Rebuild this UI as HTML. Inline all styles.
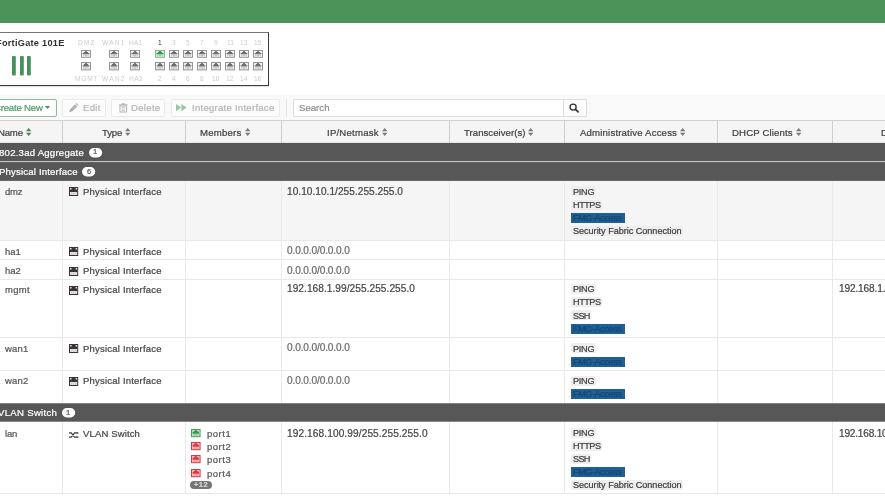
<!DOCTYPE html>
<html>
<head>
<meta charset="utf-8">
<title>Interfaces</title>
<style>
html,body{margin:0;padding:0;}
body{width:885px;height:498px;overflow:hidden;background:#fff;position:relative;font-family:"Liberation Sans",sans-serif;font-size:9.3px;color:#444;}
.a{position:absolute;}
.t{position:absolute;white-space:pre;will-change:transform;-webkit-text-stroke:0.22px;}
#w{position:absolute;left:-8px;top:-8px;width:901px;height:514px;overflow:hidden;filter:blur(0.45px);}
#i{position:absolute;left:8px;top:8px;width:885px;height:498px;opacity:0.999;}
svg{position:absolute;overflow:visible;}
</style>
</head>
<body>
<div id="w"><div id="i">

<div class="a" style="left:-8px;top:-8px;width:901px;height:31px;background:#4a9359"></div>
<div class="a" style="left:-10px;top:32px;width:277px;height:52px;border:1px solid #3a3a3a;border-top-color:#777;background:#fff;box-shadow:0 1px 1px rgba(0,0,0,.12)"></div>
<div class="t" style="left:-3.60px;top:37.21px;font-size:9.2px;line-height:12px;letter-spacing:0.267px;color:#303030;font-weight:bold;-webkit-text-stroke:0;">FortiGate 101E</div>
<svg style="left:12.4px;top:56px" width="3.8" height="19.5"><rect width="3.8" height="19.5" rx="1" fill="#44925b"/></svg>
<svg style="left:19.9px;top:56px" width="3.8" height="19.5"><rect width="3.8" height="19.5" rx="1" fill="#44925b"/></svg>
<svg style="left:27.3px;top:56px" width="3.8" height="19.5"><rect width="3.8" height="19.5" rx="1" fill="#44925b"/></svg>
<div class="t" style="left:77.65px;top:36.61px;font-size:6.6px;line-height:12px;letter-spacing:1.068px;color:#cdcdcd;-webkit-text-stroke:0;">DMZ</div>
<div class="t" style="left:74.65px;top:73.01px;font-size:6.6px;line-height:12px;letter-spacing:0.836px;color:#cdcdcd;-webkit-text-stroke:0;">MGMT</div>
<svg style="left:81.30000000000001px;top:50px" width="10" height="7.8" viewBox="0 0 10 8" preserveAspectRatio="none"><rect x=".5" y=".5" width="9" height="7" fill="#f4f4f4" stroke="#969696" stroke-width="1"/><path d="M1.6 4.4V3h1.3V2h1.2V.7h1.8V2h1.2v1h1.3v1.4z" fill="#6e6e6e"/><path d="M2.8 4.9v1.5M4.3 4.9v1.5M5.7 4.9v1.5M7.2 4.9v1.5" stroke="#9a9a9a" stroke-width=".7"/></svg>
<svg style="left:81.30000000000001px;top:62.2px" width="10" height="8.4" viewBox="0 0 10 8" preserveAspectRatio="none"><rect x=".5" y=".5" width="9" height="7" fill="#f4f4f4" stroke="#969696" stroke-width="1"/><path d="M1.6 4.4V3h1.3V2h1.2V.7h1.8V2h1.2v1h1.3v1.4z" fill="#6e6e6e"/><path d="M2.8 4.9v1.5M4.3 4.9v1.5M5.7 4.9v1.5M7.2 4.9v1.5" stroke="#9a9a9a" stroke-width=".7"/></svg>
<div class="t" style="left:102.05px;top:36.61px;font-size:6.6px;line-height:12px;letter-spacing:1.172px;color:#cdcdcd;-webkit-text-stroke:0;">WAN1</div>
<div class="t" style="left:102.05px;top:73.01px;font-size:6.6px;line-height:12px;letter-spacing:1.172px;color:#cdcdcd;-webkit-text-stroke:0;">WAN2</div>
<svg style="left:108.7px;top:50px" width="10" height="7.8" viewBox="0 0 10 8" preserveAspectRatio="none"><rect x=".5" y=".5" width="9" height="7" fill="#f4f4f4" stroke="#969696" stroke-width="1"/><path d="M1.6 4.4V3h1.3V2h1.2V.7h1.8V2h1.2v1h1.3v1.4z" fill="#6e6e6e"/><path d="M2.8 4.9v1.5M4.3 4.9v1.5M5.7 4.9v1.5M7.2 4.9v1.5" stroke="#9a9a9a" stroke-width=".7"/></svg>
<svg style="left:108.7px;top:62.2px" width="10" height="8.4" viewBox="0 0 10 8" preserveAspectRatio="none"><rect x=".5" y=".5" width="9" height="7" fill="#f4f4f4" stroke="#969696" stroke-width="1"/><path d="M1.6 4.4V3h1.3V2h1.2V.7h1.8V2h1.2v1h1.3v1.4z" fill="#6e6e6e"/><path d="M2.8 4.9v1.5M4.3 4.9v1.5M5.7 4.9v1.5M7.2 4.9v1.5" stroke="#9a9a9a" stroke-width=".7"/></svg>
<div class="t" style="left:128.75px;top:36.61px;font-size:6.6px;line-height:12px;letter-spacing:0.224px;color:#cdcdcd;-webkit-text-stroke:0;">HA1</div>
<div class="t" style="left:128.50px;top:73.01px;font-size:6.6px;line-height:12px;letter-spacing:0.391px;color:#cdcdcd;-webkit-text-stroke:0;">HA2</div>
<svg style="left:130.4px;top:50px" width="10" height="7.8" viewBox="0 0 10 8" preserveAspectRatio="none"><rect x=".5" y=".5" width="9" height="7" fill="#f4f4f4" stroke="#969696" stroke-width="1"/><path d="M1.6 4.4V3h1.3V2h1.2V.7h1.8V2h1.2v1h1.3v1.4z" fill="#6e6e6e"/><path d="M2.8 4.9v1.5M4.3 4.9v1.5M5.7 4.9v1.5M7.2 4.9v1.5" stroke="#9a9a9a" stroke-width=".7"/></svg>
<svg style="left:130.4px;top:62.2px" width="10" height="8.4" viewBox="0 0 10 8" preserveAspectRatio="none"><rect x=".5" y=".5" width="9" height="7" fill="#f4f4f4" stroke="#969696" stroke-width="1"/><path d="M1.6 4.4V3h1.3V2h1.2V.7h1.8V2h1.2v1h1.3v1.4z" fill="#6e6e6e"/><path d="M2.8 4.9v1.5M4.3 4.9v1.5M5.7 4.9v1.5M7.2 4.9v1.5" stroke="#9a9a9a" stroke-width=".7"/></svg>
<div class="t" style="left:158.16px;top:36.61px;font-size:6.6px;line-height:12px;letter-spacing:0.000px;color:#333;-webkit-text-stroke:0;">1</div>
<div class="t" style="left:158.16px;top:73.01px;font-size:6.6px;line-height:12px;letter-spacing:0.000px;color:#cdcdcd;-webkit-text-stroke:0;">2</div>
<svg style="left:154.9px;top:50px" width="10" height="7.8" viewBox="0 0 10 8" preserveAspectRatio="none"><rect x=".5" y=".5" width="9" height="7" fill="#d9efdd" stroke="#7cc08c" stroke-width="1"/><path d="M1.6 4.4V3h1.3V2h1.2V.7h1.8V2h1.2v1h1.3v1.4z" fill="#3c8f54"/><path d="M2.8 4.9v1.5M4.3 4.9v1.5M5.7 4.9v1.5M7.2 4.9v1.5" stroke="#69b07c" stroke-width=".7"/></svg>
<svg style="left:154.9px;top:62.2px" width="10" height="8.4" viewBox="0 0 10 8" preserveAspectRatio="none"><rect x=".5" y=".5" width="9" height="7" fill="#f4f4f4" stroke="#969696" stroke-width="1"/><path d="M1.6 4.4V3h1.3V2h1.2V.7h1.8V2h1.2v1h1.3v1.4z" fill="#6e6e6e"/><path d="M2.8 4.9v1.5M4.3 4.9v1.5M5.7 4.9v1.5M7.2 4.9v1.5" stroke="#9a9a9a" stroke-width=".7"/></svg>
<div class="t" style="left:172.16px;top:36.61px;font-size:6.6px;line-height:12px;letter-spacing:0.000px;color:#cdcdcd;-webkit-text-stroke:0;">3</div>
<div class="t" style="left:172.16px;top:73.01px;font-size:6.6px;line-height:12px;letter-spacing:0.000px;color:#cdcdcd;-webkit-text-stroke:0;">4</div>
<svg style="left:168.9px;top:50px" width="10" height="7.8" viewBox="0 0 10 8" preserveAspectRatio="none"><rect x=".5" y=".5" width="9" height="7" fill="#f4f4f4" stroke="#969696" stroke-width="1"/><path d="M1.6 4.4V3h1.3V2h1.2V.7h1.8V2h1.2v1h1.3v1.4z" fill="#6e6e6e"/><path d="M2.8 4.9v1.5M4.3 4.9v1.5M5.7 4.9v1.5M7.2 4.9v1.5" stroke="#9a9a9a" stroke-width=".7"/></svg>
<svg style="left:168.9px;top:62.2px" width="10" height="8.4" viewBox="0 0 10 8" preserveAspectRatio="none"><rect x=".5" y=".5" width="9" height="7" fill="#f4f4f4" stroke="#969696" stroke-width="1"/><path d="M1.6 4.4V3h1.3V2h1.2V.7h1.8V2h1.2v1h1.3v1.4z" fill="#6e6e6e"/><path d="M2.8 4.9v1.5M4.3 4.9v1.5M5.7 4.9v1.5M7.2 4.9v1.5" stroke="#9a9a9a" stroke-width=".7"/></svg>
<div class="t" style="left:186.16px;top:36.61px;font-size:6.6px;line-height:12px;letter-spacing:0.000px;color:#cdcdcd;-webkit-text-stroke:0;">5</div>
<div class="t" style="left:186.16px;top:73.01px;font-size:6.6px;line-height:12px;letter-spacing:0.000px;color:#cdcdcd;-webkit-text-stroke:0;">6</div>
<svg style="left:182.9px;top:50px" width="10" height="7.8" viewBox="0 0 10 8" preserveAspectRatio="none"><rect x=".5" y=".5" width="9" height="7" fill="#f4f4f4" stroke="#969696" stroke-width="1"/><path d="M1.6 4.4V3h1.3V2h1.2V.7h1.8V2h1.2v1h1.3v1.4z" fill="#6e6e6e"/><path d="M2.8 4.9v1.5M4.3 4.9v1.5M5.7 4.9v1.5M7.2 4.9v1.5" stroke="#9a9a9a" stroke-width=".7"/></svg>
<svg style="left:182.9px;top:62.2px" width="10" height="8.4" viewBox="0 0 10 8" preserveAspectRatio="none"><rect x=".5" y=".5" width="9" height="7" fill="#f4f4f4" stroke="#969696" stroke-width="1"/><path d="M1.6 4.4V3h1.3V2h1.2V.7h1.8V2h1.2v1h1.3v1.4z" fill="#6e6e6e"/><path d="M2.8 4.9v1.5M4.3 4.9v1.5M5.7 4.9v1.5M7.2 4.9v1.5" stroke="#9a9a9a" stroke-width=".7"/></svg>
<div class="t" style="left:200.16px;top:36.61px;font-size:6.6px;line-height:12px;letter-spacing:0.000px;color:#cdcdcd;-webkit-text-stroke:0;">7</div>
<div class="t" style="left:200.16px;top:73.01px;font-size:6.6px;line-height:12px;letter-spacing:0.000px;color:#cdcdcd;-webkit-text-stroke:0;">8</div>
<svg style="left:196.9px;top:50px" width="10" height="7.8" viewBox="0 0 10 8" preserveAspectRatio="none"><rect x=".5" y=".5" width="9" height="7" fill="#f4f4f4" stroke="#969696" stroke-width="1"/><path d="M1.6 4.4V3h1.3V2h1.2V.7h1.8V2h1.2v1h1.3v1.4z" fill="#6e6e6e"/><path d="M2.8 4.9v1.5M4.3 4.9v1.5M5.7 4.9v1.5M7.2 4.9v1.5" stroke="#9a9a9a" stroke-width=".7"/></svg>
<svg style="left:196.9px;top:62.2px" width="10" height="8.4" viewBox="0 0 10 8" preserveAspectRatio="none"><rect x=".5" y=".5" width="9" height="7" fill="#f4f4f4" stroke="#969696" stroke-width="1"/><path d="M1.6 4.4V3h1.3V2h1.2V.7h1.8V2h1.2v1h1.3v1.4z" fill="#6e6e6e"/><path d="M2.8 4.9v1.5M4.3 4.9v1.5M5.7 4.9v1.5M7.2 4.9v1.5" stroke="#9a9a9a" stroke-width=".7"/></svg>
<div class="t" style="left:214.16px;top:36.61px;font-size:6.6px;line-height:12px;letter-spacing:0.000px;color:#cdcdcd;-webkit-text-stroke:0;">9</div>
<div class="t" style="left:212.33px;top:73.01px;font-size:6.6px;line-height:12px;letter-spacing:0.000px;color:#cdcdcd;-webkit-text-stroke:0;">10</div>
<svg style="left:210.9px;top:50px" width="10" height="7.8" viewBox="0 0 10 8" preserveAspectRatio="none"><rect x=".5" y=".5" width="9" height="7" fill="#f4f4f4" stroke="#969696" stroke-width="1"/><path d="M1.6 4.4V3h1.3V2h1.2V.7h1.8V2h1.2v1h1.3v1.4z" fill="#6e6e6e"/><path d="M2.8 4.9v1.5M4.3 4.9v1.5M5.7 4.9v1.5M7.2 4.9v1.5" stroke="#9a9a9a" stroke-width=".7"/></svg>
<svg style="left:210.9px;top:62.2px" width="10" height="8.4" viewBox="0 0 10 8" preserveAspectRatio="none"><rect x=".5" y=".5" width="9" height="7" fill="#f4f4f4" stroke="#969696" stroke-width="1"/><path d="M1.6 4.4V3h1.3V2h1.2V.7h1.8V2h1.2v1h1.3v1.4z" fill="#6e6e6e"/><path d="M2.8 4.9v1.5M4.3 4.9v1.5M5.7 4.9v1.5M7.2 4.9v1.5" stroke="#9a9a9a" stroke-width=".7"/></svg>
<div class="t" style="left:226.57px;top:36.61px;font-size:6.6px;line-height:12px;letter-spacing:0.000px;color:#cdcdcd;-webkit-text-stroke:0;">11</div>
<div class="t" style="left:226.33px;top:73.01px;font-size:6.6px;line-height:12px;letter-spacing:0.000px;color:#cdcdcd;-webkit-text-stroke:0;">12</div>
<svg style="left:224.9px;top:50px" width="10" height="7.8" viewBox="0 0 10 8" preserveAspectRatio="none"><rect x=".5" y=".5" width="9" height="7" fill="#f4f4f4" stroke="#969696" stroke-width="1"/><path d="M1.6 4.4V3h1.3V2h1.2V.7h1.8V2h1.2v1h1.3v1.4z" fill="#6e6e6e"/><path d="M2.8 4.9v1.5M4.3 4.9v1.5M5.7 4.9v1.5M7.2 4.9v1.5" stroke="#9a9a9a" stroke-width=".7"/></svg>
<svg style="left:224.9px;top:62.2px" width="10" height="8.4" viewBox="0 0 10 8" preserveAspectRatio="none"><rect x=".5" y=".5" width="9" height="7" fill="#f4f4f4" stroke="#969696" stroke-width="1"/><path d="M1.6 4.4V3h1.3V2h1.2V.7h1.8V2h1.2v1h1.3v1.4z" fill="#6e6e6e"/><path d="M2.8 4.9v1.5M4.3 4.9v1.5M5.7 4.9v1.5M7.2 4.9v1.5" stroke="#9a9a9a" stroke-width=".7"/></svg>
<div class="t" style="left:240.33px;top:36.61px;font-size:6.6px;line-height:12px;letter-spacing:0.000px;color:#cdcdcd;-webkit-text-stroke:0;">13</div>
<div class="t" style="left:240.33px;top:73.01px;font-size:6.6px;line-height:12px;letter-spacing:0.000px;color:#cdcdcd;-webkit-text-stroke:0;">14</div>
<svg style="left:238.9px;top:50px" width="10" height="7.8" viewBox="0 0 10 8" preserveAspectRatio="none"><rect x=".5" y=".5" width="9" height="7" fill="#f4f4f4" stroke="#969696" stroke-width="1"/><path d="M1.6 4.4V3h1.3V2h1.2V.7h1.8V2h1.2v1h1.3v1.4z" fill="#6e6e6e"/><path d="M2.8 4.9v1.5M4.3 4.9v1.5M5.7 4.9v1.5M7.2 4.9v1.5" stroke="#9a9a9a" stroke-width=".7"/></svg>
<svg style="left:238.9px;top:62.2px" width="10" height="8.4" viewBox="0 0 10 8" preserveAspectRatio="none"><rect x=".5" y=".5" width="9" height="7" fill="#f4f4f4" stroke="#969696" stroke-width="1"/><path d="M1.6 4.4V3h1.3V2h1.2V.7h1.8V2h1.2v1h1.3v1.4z" fill="#6e6e6e"/><path d="M2.8 4.9v1.5M4.3 4.9v1.5M5.7 4.9v1.5M7.2 4.9v1.5" stroke="#9a9a9a" stroke-width=".7"/></svg>
<div class="t" style="left:254.33px;top:36.61px;font-size:6.6px;line-height:12px;letter-spacing:0.000px;color:#cdcdcd;-webkit-text-stroke:0;">15</div>
<div class="t" style="left:254.33px;top:73.01px;font-size:6.6px;line-height:12px;letter-spacing:0.000px;color:#cdcdcd;-webkit-text-stroke:0;">16</div>
<svg style="left:252.9px;top:50px" width="10" height="7.8" viewBox="0 0 10 8" preserveAspectRatio="none"><rect x=".5" y=".5" width="9" height="7" fill="#f4f4f4" stroke="#969696" stroke-width="1"/><path d="M1.6 4.4V3h1.3V2h1.2V.7h1.8V2h1.2v1h1.3v1.4z" fill="#6e6e6e"/><path d="M2.8 4.9v1.5M4.3 4.9v1.5M5.7 4.9v1.5M7.2 4.9v1.5" stroke="#9a9a9a" stroke-width=".7"/></svg>
<svg style="left:252.9px;top:62.2px" width="10" height="8.4" viewBox="0 0 10 8" preserveAspectRatio="none"><rect x=".5" y=".5" width="9" height="7" fill="#f4f4f4" stroke="#969696" stroke-width="1"/><path d="M1.6 4.4V3h1.3V2h1.2V.7h1.8V2h1.2v1h1.3v1.4z" fill="#6e6e6e"/><path d="M2.8 4.9v1.5M4.3 4.9v1.5M5.7 4.9v1.5M7.2 4.9v1.5" stroke="#9a9a9a" stroke-width=".7"/></svg>
<div class="a" style="left:-8px;top:95px;width:901px;height:25px;background:#f9f9f9"></div>
<div class="a" style="left:-10px;top:99px;width:64.5px;height:16px;border:1px solid #8dbb99;border-radius:2px;background:#fff"></div>
<div class="t" style="left:-6.30px;top:102.37px;font-size:9.6px;line-height:12px;letter-spacing:-0.196px;color:#4f9a63;">Create New</div>
<svg style="left:45.2px;top:106.3px" width="5" height="3" viewBox="0 0 5 3"><path d="M0 0h5L2.5 3z" fill="#4f8a5f"/></svg>
<div class="a" style="left:62px;top:99px;width:42px;height:16px;border:1px solid #eaeaea;border-radius:2px;background:#fcfcfc"></div>
<svg style="left:68.5px;top:102.5px" width="9.5" height="9.5" viewBox="0 0 10 10"><path d="M0.3 9.7l.7-2.9 5.4-5.4 2.2 2.2-5.4 5.4zM7 .8l.9-.8 2.1 2.2-.8.8z" fill="#b0b0b0"/></svg>
<div class="t" style="left:83.00px;top:102.37px;font-size:9.6px;line-height:12px;letter-spacing:0.313px;color:#b4b4b4;">Edit</div>
<div class="a" style="left:111px;top:99px;width:52px;height:16px;border:1px solid #eaeaea;border-radius:2px;background:#fcfcfc"></div>
<svg style="left:118.5px;top:102.5px" width="8.5" height="9.5" viewBox="0 0 9 10"><path d="M0 1.4h2.8V.3h3.4v1.1H9v1.2H0z" fill="#b6b6b6"/><path d="M1 3.2h7v6.3H1z" fill="none" stroke="#b6b6b6" stroke-width="1.1"/><path d="M2.9 4.8h3.2M2.9 6.4h3.2M2.9 8h3.2" stroke="#b6b6b6" stroke-width=".8"/></svg>
<div class="t" style="left:130.50px;top:102.37px;font-size:9.6px;line-height:12px;letter-spacing:0.294px;color:#b4b4b4;">Delete</div>
<div class="a" style="left:170.5px;top:99px;width:107.5px;height:16px;border:1px solid #eaeaea;border-radius:2px;background:#fcfcfc"></div>
<svg style="left:176.4px;top:104.3px" width="10.6" height="7.2" viewBox="0 0 10.6 8.4" preserveAspectRatio="none"><path d="M0 0l5.2 4.2L0 8.4zM5.4 0l5.2 4.2-5.2 4.2z" fill="#96c6a2"/></svg>
<div class="t" style="left:191.50px;top:102.37px;font-size:9.6px;line-height:12px;letter-spacing:0.243px;color:#b4b4b4;">Integrate Interface</div>
<div class="a" style="left:286px;top:99px;width:1px;height:18px;background:#e3e3e3"></div>
<div class="a" style="left:293px;top:99px;width:269.5px;height:16px;border:1px solid #dddddd;background:#fff"></div>
<div class="t" style="left:298.80px;top:102.37px;font-size:9.6px;line-height:12px;letter-spacing:0.016px;color:#8e8e8e;">Search</div>
<div class="a" style="left:563.5px;top:99px;width:22px;height:16px;border:1px solid #dddddd;border-left:none;background:#fdfdfd"></div>
<div class="a" style="left:563px;top:100px;width:1px;height:16px;background:#dcdcdc"></div>
<svg style="left:569.3px;top:103.4px" width="10.5" height="10" viewBox="0 0 10.5 10"><circle cx="4.1" cy="4.1" r="3.05" fill="none" stroke="#333" stroke-width="1.35"/><path d="M6.5 6.4l2.6 2.5" stroke="#333" stroke-width="1.7" stroke-linecap="round"/></svg>
<div class="a" style="left:-8px;top:120px;width:901px;height:23px;background:#f5f5f5;border-top:1px solid #d0d0d0;box-sizing:border-box"></div>
<div class="a" style="left:61.5px;top:121px;width:1px;height:22px;background:#cfcfcf"></div>
<div class="a" style="left:184.5px;top:121px;width:1px;height:22px;background:#cfcfcf"></div>
<div class="a" style="left:280.5px;top:121px;width:1px;height:22px;background:#cfcfcf"></div>
<div class="a" style="left:449.0px;top:121px;width:1px;height:22px;background:#cfcfcf"></div>
<div class="a" style="left:563.8px;top:121px;width:1px;height:22px;background:#cfcfcf"></div>
<div class="a" style="left:716.9px;top:121px;width:1px;height:22px;background:#cfcfcf"></div>
<div class="a" style="left:832.1px;top:121px;width:1px;height:22px;background:#cfcfcf"></div>
<div class="t" style="left:-2.20px;top:127.07px;font-size:9.6px;line-height:12px;letter-spacing:-0.198px;color:#3f3f3f;">Name</div>
<svg style="left:26.3px;top:128.2px" width="5.4" height="8.1" viewBox="0 0 6 9" preserveAspectRatio="none"><path d="M0 3.7L3 0l3 3.7zM0 5.3h6L3 9z" fill="#52805f"/></svg>
<div class="t" style="left:101.60px;top:127.07px;font-size:9.6px;line-height:12px;letter-spacing:-0.178px;color:#3f3f3f;">Type</div>
<svg style="left:125.2px;top:128.2px" width="5.4" height="8.1" viewBox="0 0 6 9" preserveAspectRatio="none"><path d="M0 3.7L3 0l3 3.7zM0 5.3h6L3 9z" fill="#7b7b7b"/></svg>
<div class="t" style="left:199.60px;top:127.07px;font-size:9.6px;line-height:12px;letter-spacing:0.202px;color:#3f3f3f;">Members</div>
<svg style="left:244.5px;top:128.2px" width="5.4" height="8.1" viewBox="0 0 6 9" preserveAspectRatio="none"><path d="M0 3.7L3 0l3 3.7zM0 5.3h6L3 9z" fill="#7b7b7b"/></svg>
<div class="t" style="left:327.30px;top:127.07px;font-size:9.6px;line-height:12px;letter-spacing:0.211px;color:#3f3f3f;">IP/Netmask</div>
<svg style="left:382.2px;top:128.2px" width="5.4" height="8.1" viewBox="0 0 6 9" preserveAspectRatio="none"><path d="M0 3.7L3 0l3 3.7zM0 5.3h6L3 9z" fill="#7b7b7b"/></svg>
<div class="t" style="left:463.80px;top:127.07px;font-size:9.6px;line-height:12px;letter-spacing:0.039px;color:#3f3f3f;">Transceiver(s)</div>
<svg style="left:528.3px;top:128.2px" width="5.4" height="8.1" viewBox="0 0 6 9" preserveAspectRatio="none"><path d="M0 3.7L3 0l3 3.7zM0 5.3h6L3 9z" fill="#7b7b7b"/></svg>
<div class="t" style="left:579.70px;top:127.07px;font-size:9.6px;line-height:12px;letter-spacing:0.180px;color:#3f3f3f;">Administrative Access</div>
<svg style="left:680.2px;top:128.2px" width="5.4" height="8.1" viewBox="0 0 6 9" preserveAspectRatio="none"><path d="M0 3.7L3 0l3 3.7zM0 5.3h6L3 9z" fill="#7b7b7b"/></svg>
<div class="t" style="left:731.50px;top:127.07px;font-size:9.6px;line-height:12px;letter-spacing:0.140px;color:#3f3f3f;">DHCP Clients</div>
<svg style="left:796px;top:128.2px" width="5.4" height="8.1" viewBox="0 0 6 9" preserveAspectRatio="none"><path d="M0 3.7L3 0l3 3.7zM0 5.3h6L3 9z" fill="#7b7b7b"/></svg>
<div class="t" style="left:881.20px;top:127.07px;font-size:9.6px;line-height:12px;letter-spacing:0.000px;color:#3f3f3f;">D</div>
<div class="a" style="left:-8px;top:181px;width:901px;height:59px;background:#f5f5f5"></div>
<div class="a" style="left:-8px;top:240px;width:901px;height:20px;background:#fff"></div>
<div class="a" style="left:-8px;top:260px;width:901px;height:19px;background:#fff"></div>
<div class="a" style="left:-8px;top:279px;width:901px;height:59px;background:#fff"></div>
<div class="a" style="left:-8px;top:338px;width:901px;height:32px;background:#fff"></div>
<div class="a" style="left:-8px;top:370px;width:901px;height:33px;background:#fff"></div>
<div class="a" style="left:-8px;top:421px;width:901px;height:72px;background:#fff"></div>
<div class="a" style="left:-8px;top:240px;width:901px;height:1px;background:#e8e8e8"></div>
<div class="a" style="left:-8px;top:259px;width:901px;height:1px;background:#e8e8e8"></div>
<div class="a" style="left:-8px;top:279px;width:901px;height:1px;background:#e8e8e8"></div>
<div class="a" style="left:-8px;top:337px;width:901px;height:1px;background:#e8e8e8"></div>
<div class="a" style="left:-8px;top:370px;width:901px;height:1px;background:#e8e8e8"></div>
<div class="a" style="left:-8px;top:403px;width:901px;height:1px;background:#e8e8e8"></div>
<div class="a" style="left:-8px;top:493px;width:901px;height:1px;background:#e8e8e8"></div>
<div class="a" style="left:61.5px;top:181px;width:1px;height:313px;background:#eaeaea"></div>
<div class="a" style="left:184.5px;top:181px;width:1px;height:313px;background:#eaeaea"></div>
<div class="a" style="left:280.5px;top:181px;width:1px;height:313px;background:#eaeaea"></div>
<div class="a" style="left:449.0px;top:181px;width:1px;height:313px;background:#eaeaea"></div>
<div class="a" style="left:563.8px;top:181px;width:1px;height:313px;background:#eaeaea"></div>
<div class="a" style="left:716.9px;top:181px;width:1px;height:313px;background:#eaeaea"></div>
<div class="a" style="left:832.1px;top:181px;width:1px;height:313px;background:#eaeaea"></div>
<div class="a" style="left:-8px;top:144px;width:901px;height:36px;background:#cfcfcf"></div>
<svg style="left:-8px;top:141px" width="901" height="22"><rect x="0" y="1.90" width="901" height="18.20" fill="#575757"/></svg><div class="t" style="left:-0.80px;top:146.57px;font-size:9.6px;line-height:12px;letter-spacing:0.230px;color:#fff;will-change:transform;">802.3ad Aggregate</div><svg style="left:88.8px;top:147.5px" width="13.2" height="9.4"><rect width="13.2" height="9.4" rx="4.7" fill="#fff"/></svg><div class="t" style="left:93.30px;top:146.37px;font-size:7.6px;line-height:12px;letter-spacing:0.000px;color:#555;">1</div>
<svg style="left:-8px;top:161px" width="901" height="22"><rect x="0" y="1.10" width="901" height="18.80" fill="#575757"/></svg><div class="t" style="left:-1.20px;top:166.07px;font-size:9.6px;line-height:12px;letter-spacing:0.170px;color:#fff;will-change:transform;">Physical Interface</div><svg style="left:82.1px;top:167.0px" width="13.2" height="9.4"><rect width="13.2" height="9.4" rx="4.7" fill="#fff"/></svg><div class="t" style="left:86.60px;top:165.87px;font-size:7.6px;line-height:12px;letter-spacing:0.000px;color:#555;">6</div>
<svg style="left:-8px;top:402px" width="901" height="22"><rect x="0" y="1.30" width="901" height="18.40" fill="#575757"/></svg><div class="t" style="left:-2.20px;top:407.07px;font-size:9.6px;line-height:12px;letter-spacing:0.292px;color:#fff;will-change:transform;">VLAN Switch</div><svg style="left:61.8px;top:408.0px" width="13.2" height="9.4"><rect width="13.2" height="9.4" rx="4.7" fill="#fff"/></svg><div class="t" style="left:66.30px;top:406.87px;font-size:7.6px;line-height:12px;letter-spacing:0.000px;color:#555;">1</div>
<div class="t" style="left:4.90px;top:185.71px;font-size:9.5px;line-height:12px;letter-spacing:-0.284px;color:#555;">dmz</div>
<svg style="left:69.1px;top:187.3px" width="9.2" height="9" viewBox="0 0 9.2 9"><rect x=".5" y=".5" width="8.2" height="8" fill="#e4e0e2" stroke="#3a3237" stroke-width="1"/><path d="M1 5V2.6h1.6V1h4v1.6h1.6V5z" fill="#3a3237"/><path d="M2.6 5.6v2.2M4.6 5.6v2.2M6.6 5.6v2.2" stroke="#c4bec1" stroke-width=".6"/></svg>
<div class="t" style="left:83.10px;top:185.71px;font-size:9.5px;line-height:12px;letter-spacing:0.212px;color:#454545;">Physical Interface</div>
<div class="t" style="left:286.70px;top:185.70px;font-size:10.1px;line-height:12px;letter-spacing:0.038px;color:#454545;">10.10.10.1/255.255.255.0</div>
<div class="a" style="left:571.0px;top:186.4px;width:24.9px;height:10px;border-radius:2px;background:#eeeeee"></div><div class="t" style="left:572.80px;top:185.50px;font-size:9.1px;line-height:12px;letter-spacing:-0.234px;color:#3d3d3d;">PING</div>
<div class="a" style="left:571.0px;top:199.5px;width:31.2px;height:10px;border-radius:2px;background:#eeeeee"></div><div class="t" style="left:572.80px;top:198.65px;font-size:9.1px;line-height:12px;letter-spacing:-0.442px;color:#3d3d3d;">HTTPS</div>
<div class="a" style="left:570.6px;top:212.7px;width:54px;height:10px;background:#1d5f97"></div><div class="t" style="left:573.40px;top:211.78px;font-size:9.0px;line-height:12px;letter-spacing:-0.352px;color:#1b446e;">FMG-Access</div>
<div class="a" style="left:571.0px;top:225.8px;width:112.1px;height:10px;border-radius:2px;background:#eeeeee"></div><div class="t" style="left:572.80px;top:224.95px;font-size:9.1px;line-height:12px;letter-spacing:-0.026px;color:#3d3d3d;">Security Fabric Connection</div>
<div class="t" style="left:4.90px;top:245.61px;font-size:9.5px;line-height:12px;letter-spacing:-0.053px;color:#555;">ha1</div>
<svg style="left:69.1px;top:247.2px" width="9.2" height="9" viewBox="0 0 9.2 9"><rect x=".5" y=".5" width="8.2" height="8" fill="#e4e0e2" stroke="#3a3237" stroke-width="1"/><path d="M1 5V2.6h1.6V1h4v1.6h1.6V5z" fill="#3a3237"/><path d="M2.6 5.6v2.2M4.6 5.6v2.2M6.6 5.6v2.2" stroke="#c4bec1" stroke-width=".6"/></svg>
<div class="t" style="left:83.10px;top:245.61px;font-size:9.5px;line-height:12px;letter-spacing:0.212px;color:#454545;">Physical Interface</div>
<div class="t" style="left:286.70px;top:244.80px;font-size:10.1px;line-height:12px;letter-spacing:-0.123px;color:#6a6a6a;">0.0.0.0/0.0.0.0</div>
<div class="t" style="left:4.90px;top:265.41px;font-size:9.5px;line-height:12px;letter-spacing:0.014px;color:#555;">ha2</div>
<svg style="left:69.1px;top:267.0px" width="9.2" height="9" viewBox="0 0 9.2 9"><rect x=".5" y=".5" width="8.2" height="8" fill="#e4e0e2" stroke="#3a3237" stroke-width="1"/><path d="M1 5V2.6h1.6V1h4v1.6h1.6V5z" fill="#3a3237"/><path d="M2.6 5.6v2.2M4.6 5.6v2.2M6.6 5.6v2.2" stroke="#c4bec1" stroke-width=".6"/></svg>
<div class="t" style="left:83.10px;top:265.41px;font-size:9.5px;line-height:12px;letter-spacing:0.212px;color:#454545;">Physical Interface</div>
<div class="t" style="left:286.70px;top:264.60px;font-size:10.1px;line-height:12px;letter-spacing:-0.123px;color:#6a6a6a;">0.0.0.0/0.0.0.0</div>
<div class="t" style="left:4.90px;top:284.11px;font-size:9.5px;line-height:12px;letter-spacing:0.338px;color:#555;">mgmt</div>
<svg style="left:69.1px;top:285.7px" width="9.2" height="9" viewBox="0 0 9.2 9"><rect x=".5" y=".5" width="8.2" height="8" fill="#e4e0e2" stroke="#3a3237" stroke-width="1"/><path d="M1 5V2.6h1.6V1h4v1.6h1.6V5z" fill="#3a3237"/><path d="M2.6 5.6v2.2M4.6 5.6v2.2M6.6 5.6v2.2" stroke="#c4bec1" stroke-width=".6"/></svg>
<div class="t" style="left:83.10px;top:284.11px;font-size:9.5px;line-height:12px;letter-spacing:0.212px;color:#454545;">Physical Interface</div>
<div class="t" style="left:286.70px;top:283.40px;font-size:10.1px;line-height:12px;letter-spacing:0.066px;color:#454545;">192.168.1.99/255.255.255.0</div>
<div class="a" style="left:571.0px;top:284.1px;width:24.9px;height:10px;border-radius:2px;background:#eeeeee"></div><div class="t" style="left:572.80px;top:283.20px;font-size:9.1px;line-height:12px;letter-spacing:-0.234px;color:#3d3d3d;">PING</div>
<div class="a" style="left:571.0px;top:297.2px;width:31.2px;height:10px;border-radius:2px;background:#eeeeee"></div><div class="t" style="left:572.80px;top:296.35px;font-size:9.1px;line-height:12px;letter-spacing:-0.442px;color:#3d3d3d;">HTTPS</div>
<div class="a" style="left:571.0px;top:310.4px;width:20.4px;height:10px;border-radius:2px;background:#eeeeee"></div><div class="t" style="left:572.80px;top:309.50px;font-size:9.1px;line-height:12px;letter-spacing:-0.634px;color:#3d3d3d;">SSH</div>
<div class="a" style="left:570.6px;top:323.5px;width:54px;height:10px;background:#1d5f97"></div><div class="t" style="left:573.40px;top:322.63px;font-size:9.0px;line-height:12px;letter-spacing:-0.352px;color:#1b446e;">FMG-Access</div>
<div class="t" style="left:839.20px;top:283.40px;font-size:10.1px;line-height:12px;letter-spacing:-0.139px;color:#454545;">192.168.1.110</div>
<div class="t" style="left:4.90px;top:342.61px;font-size:9.5px;line-height:12px;letter-spacing:0.170px;color:#555;">wan1</div>
<svg style="left:69.1px;top:344.2px" width="9.2" height="9" viewBox="0 0 9.2 9"><rect x=".5" y=".5" width="8.2" height="8" fill="#e4e0e2" stroke="#3a3237" stroke-width="1"/><path d="M1 5V2.6h1.6V1h4v1.6h1.6V5z" fill="#3a3237"/><path d="M2.6 5.6v2.2M4.6 5.6v2.2M6.6 5.6v2.2" stroke="#c4bec1" stroke-width=".6"/></svg>
<div class="t" style="left:83.10px;top:342.61px;font-size:9.5px;line-height:12px;letter-spacing:0.212px;color:#454545;">Physical Interface</div>
<div class="t" style="left:286.70px;top:341.80px;font-size:10.1px;line-height:12px;letter-spacing:-0.123px;color:#6a6a6a;">0.0.0.0/0.0.0.0</div>
<div class="a" style="left:571.0px;top:343.4px;width:24.9px;height:10px;border-radius:2px;background:#eeeeee"></div><div class="t" style="left:572.80px;top:342.50px;font-size:9.1px;line-height:12px;letter-spacing:-0.234px;color:#3d3d3d;">PING</div>
<div class="a" style="left:570.6px;top:356.5px;width:54px;height:10px;background:#1d5f97"></div><div class="t" style="left:573.40px;top:355.63px;font-size:9.0px;line-height:12px;letter-spacing:-0.352px;color:#1b446e;">FMG-Access</div>
<div class="t" style="left:4.90px;top:375.01px;font-size:9.5px;line-height:12px;letter-spacing:0.170px;color:#555;">wan2</div>
<svg style="left:69.1px;top:376.6px" width="9.2" height="9" viewBox="0 0 9.2 9"><rect x=".5" y=".5" width="8.2" height="8" fill="#e4e0e2" stroke="#3a3237" stroke-width="1"/><path d="M1 5V2.6h1.6V1h4v1.6h1.6V5z" fill="#3a3237"/><path d="M2.6 5.6v2.2M4.6 5.6v2.2M6.6 5.6v2.2" stroke="#c4bec1" stroke-width=".6"/></svg>
<div class="t" style="left:83.10px;top:375.01px;font-size:9.5px;line-height:12px;letter-spacing:0.212px;color:#454545;">Physical Interface</div>
<div class="t" style="left:286.70px;top:375.40px;font-size:10.1px;line-height:12px;letter-spacing:-0.123px;color:#6a6a6a;">0.0.0.0/0.0.0.0</div>
<div class="a" style="left:571.0px;top:376.0px;width:24.9px;height:10px;border-radius:2px;background:#eeeeee"></div><div class="t" style="left:572.80px;top:375.10px;font-size:9.1px;line-height:12px;letter-spacing:-0.234px;color:#3d3d3d;">PING</div>
<div class="a" style="left:570.6px;top:389.1px;width:54px;height:10px;background:#1d5f97"></div><div class="t" style="left:573.40px;top:388.23px;font-size:9.0px;line-height:12px;letter-spacing:-0.352px;color:#1b446e;">FMG-Access</div>
<div class="t" style="left:4.90px;top:427.81px;font-size:9.5px;line-height:12px;letter-spacing:-0.163px;color:#555;">lan</div>
<svg style="left:68.7px;top:431.5px" width="10" height="6" viewBox="0 0 10 6"><path d="M0 .9h2.2L5.6 5.1H8M0 5.1h2.2L5.6 .9H8" fill="none" stroke="#3c3c3c" stroke-width="1.15"/><path d="M7.8 -.3L10 .9 7.8 2.1zM7.8 3.9L10 5.1 7.8 6.3z" fill="#444"/></svg>
<div class="t" style="left:83.20px;top:427.81px;font-size:9.5px;line-height:12px;letter-spacing:0.142px;color:#454545;">VLAN Switch</div>
<div class="t" style="left:286.70px;top:427.50px;font-size:10.1px;line-height:12px;letter-spacing:0.113px;color:#454545;">192.168.100.99/255.255.255.0</div>
<div class="a" style="left:571.0px;top:428.1px;width:24.9px;height:10px;border-radius:2px;background:#eeeeee"></div><div class="t" style="left:572.80px;top:427.20px;font-size:9.1px;line-height:12px;letter-spacing:-0.234px;color:#3d3d3d;">PING</div>
<div class="a" style="left:571.0px;top:441.1px;width:31.2px;height:10px;border-radius:2px;background:#eeeeee"></div><div class="t" style="left:572.80px;top:440.20px;font-size:9.1px;line-height:12px;letter-spacing:-0.442px;color:#3d3d3d;">HTTPS</div>
<div class="a" style="left:571.0px;top:454.1px;width:20.4px;height:10px;border-radius:2px;background:#eeeeee"></div><div class="t" style="left:572.80px;top:453.20px;font-size:9.1px;line-height:12px;letter-spacing:-0.634px;color:#3d3d3d;">SSH</div>
<div class="a" style="left:570.6px;top:467.1px;width:54px;height:10px;background:#1d5f97"></div><div class="t" style="left:573.40px;top:466.18px;font-size:9.0px;line-height:12px;letter-spacing:-0.352px;color:#1b446e;">FMG-Access</div>
<div class="a" style="left:571.0px;top:480.1px;width:112.1px;height:10px;border-radius:2px;background:#eeeeee"></div><div class="t" style="left:572.80px;top:479.20px;font-size:9.1px;line-height:12px;letter-spacing:-0.026px;color:#3d3d3d;">Security Fabric Connection</div>
<div class="t" style="left:839.20px;top:427.90px;font-size:10.1px;line-height:12px;letter-spacing:-0.202px;color:#454545;">192.168.100.110</div>
<svg style="left:191.2px;top:428.9px" width="9.6" height="8.2" viewBox="0 0 9.6 8.2"><rect x=".5" y=".5" width="8.6" height="7.2" fill="#c3e3ca" stroke="#4a9e60" stroke-width="1"/><path d="M1.6 4.8V2.8h1.2V1.8h1.2V1h1.6v.8h1.2v1h1.2v2z" fill="#3f9657"/><path d="M2.8 5.3v1.4M4.1 5.3v1.4M5.5 5.3v1.4M6.8 5.3v1.4" stroke="#3f9657" stroke-width=".6" opacity=".7"/></svg>
<div class="t" style="left:207.30px;top:427.61px;font-size:9.5px;line-height:12px;letter-spacing:0.529px;color:#555;">port1</div>
<svg style="left:191.2px;top:441.8px" width="9.6" height="8.2" viewBox="0 0 9.6 8.2"><rect x=".5" y=".5" width="8.6" height="7.2" fill="#f8c3c5" stroke="#d8383f" stroke-width="1"/><path d="M1.6 4.8V2.8h1.2V1.8h1.2V1h1.6v.8h1.2v1h1.2v2z" fill="#dc3a42"/><path d="M2.8 5.3v1.4M4.1 5.3v1.4M5.5 5.3v1.4M6.8 5.3v1.4" stroke="#dc3a42" stroke-width=".6" opacity=".7"/></svg>
<div class="t" style="left:207.30px;top:440.51px;font-size:9.5px;line-height:12px;letter-spacing:0.529px;color:#555;">port2</div>
<svg style="left:191.2px;top:455.0px" width="9.6" height="8.2" viewBox="0 0 9.6 8.2"><rect x=".5" y=".5" width="8.6" height="7.2" fill="#f8c3c5" stroke="#d8383f" stroke-width="1"/><path d="M1.6 4.8V2.8h1.2V1.8h1.2V1h1.6v.8h1.2v1h1.2v2z" fill="#dc3a42"/><path d="M2.8 5.3v1.4M4.1 5.3v1.4M5.5 5.3v1.4M6.8 5.3v1.4" stroke="#dc3a42" stroke-width=".6" opacity=".7"/></svg>
<div class="t" style="left:207.30px;top:453.71px;font-size:9.5px;line-height:12px;letter-spacing:0.529px;color:#555;">port3</div>
<svg style="left:191.2px;top:468.8px" width="9.6" height="8.2" viewBox="0 0 9.6 8.2"><rect x=".5" y=".5" width="8.6" height="7.2" fill="#f8c3c5" stroke="#d8383f" stroke-width="1"/><path d="M1.6 4.8V2.8h1.2V1.8h1.2V1h1.6v.8h1.2v1h1.2v2z" fill="#dc3a42"/><path d="M2.8 5.3v1.4M4.1 5.3v1.4M5.5 5.3v1.4M6.8 5.3v1.4" stroke="#dc3a42" stroke-width=".6" opacity=".7"/></svg>
<div class="t" style="left:207.30px;top:467.51px;font-size:9.5px;line-height:12px;letter-spacing:0.529px;color:#555;">port4</div>
<div class="a" style="left:190.2px;top:481px;width:21.8px;height:7.8px;border-radius:4px;background:#757575"></div>
<div class="t" style="left:194.00px;top:479.04px;font-size:7.4px;line-height:12px;letter-spacing:0.484px;color:#d8d8d8;font-weight:bold;">+12</div>
</div></div>
</body>
</html>
